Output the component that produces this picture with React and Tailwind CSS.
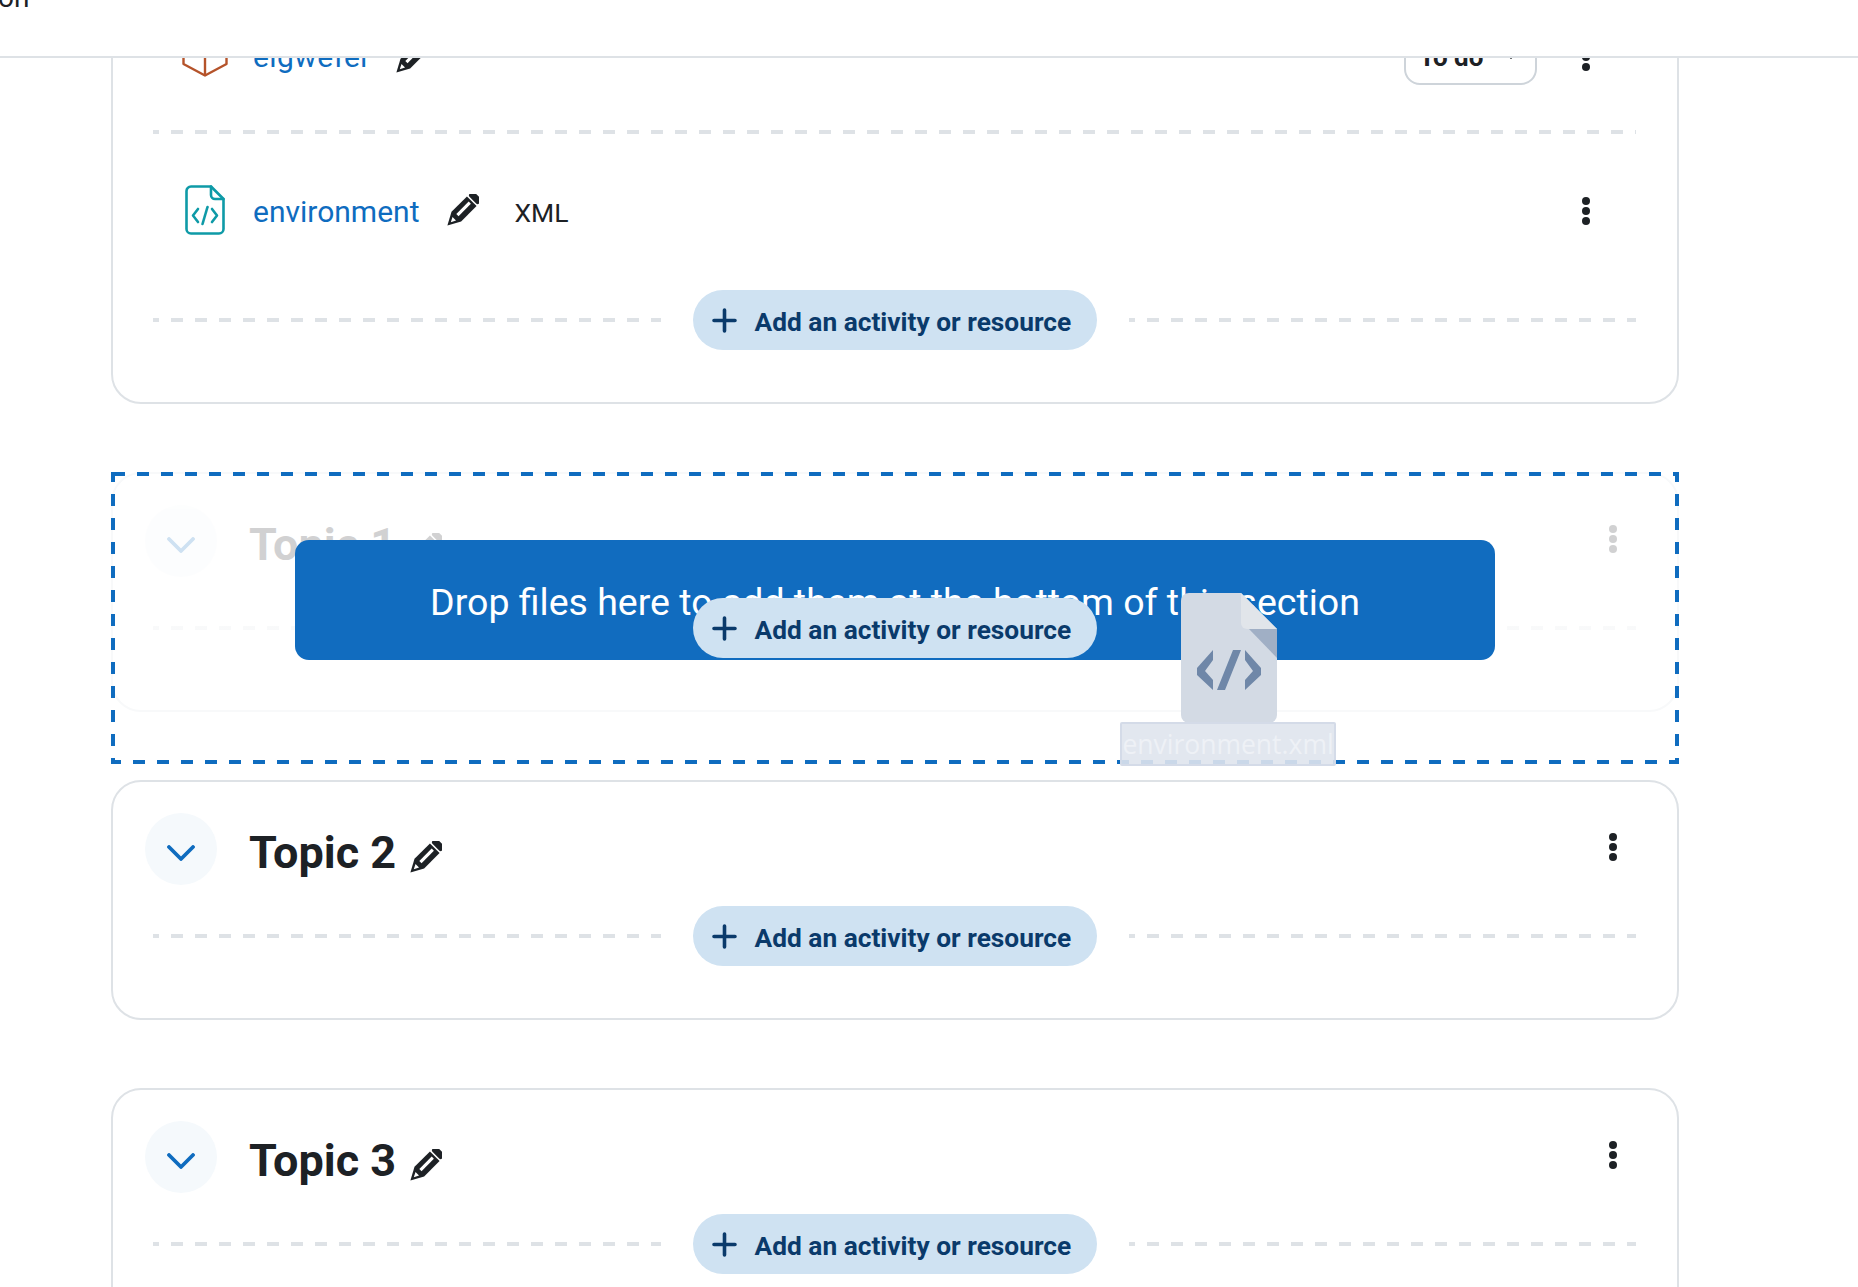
import React from "react";

const FONT = { fontFamily: "Roboto, sans-serif" };

function Pencil({ className }) {
  return (
    <svg viewBox="-17 -17 34 34" className={className} aria-hidden="true">
      <g transform="rotate(45)">
        <rect x="-7" y="-22" width="14" height="7" rx="2.5" fill="#1d2125" />
        <path d="M-7 -13.5 H7 V9 L0 22 L-7 9 Z" fill="#1d2125" />
        <path d="M-2 -11 H1.2 V7 H-2 Z" fill="#fff" />
        <path d="M-2.6 12 H2.6 L0 17 Z" fill="#fff" />
      </g>
    </svg>
  );
}

function Kebab({ className }) {
  return (
    <svg viewBox="0 0 8 28" className={className} fill="#1d2125" aria-hidden="true">
      <circle cx="4" cy="4" r="4" />
      <circle cx="4" cy="14" r="4" />
      <circle cx="4" cy="24" r="4" />
    </svg>
  );
}

function CodeFileIcon() {
  return (
    <svg viewBox="0 0 40 50" className="w-[40px] h-[50px] -mt-[5px]" fill="none" stroke="#0e9aa7" strokeWidth="2.6" strokeLinecap="round" strokeLinejoin="round">
      <path d="M26 1.5 H6 a4.5 4.5 0 0 0 -4.5 4.5 V44 a4.5 4.5 0 0 0 4.5 4.5 H34 a4.5 4.5 0 0 0 4.5 -4.5 V14 Z" />
      <path d="M26 1.5 V10 a4 4 0 0 0 4 4 H38.5" />
      <path d="M13 24 L8 30.5 L13 37" />
      <path d="M27 24 L32 30.5 L27 37" />
      <path d="M22.5 22 L17.5 39" />
    </svg>
  );
}

function BoxIcon() {
  return (
    <svg viewBox="0 0 46 50" className="w-[46px] h-[50px] mb-[10px]" fill="none" stroke="#b5532a" strokeWidth="2.4" strokeLinejoin="round">
      <path d="M23 1.5 L44.5 13 V37 L23 48.5 L1.5 37 V13 Z" />
      <path d="M1.5 13 L23 25 L44.5 13" />
      <path d="M23 25 V48.5" />
    </svg>
  );
}

function Dashes({ className = "" }) {
  return (
    <div className={`flex-1 h-[4px] bg-[repeating-linear-gradient(90deg,#dee2e6_0,#dee2e6_6px,transparent_6px,transparent_18px,#dee2e6_18px,#dee2e6_24px)] ${className}`} />
  );
}

function AddRow({ faded }) {
  return (
    <div className="flex items-center">
      <Dashes className={faded ? "opacity-20" : ""} />
      <button className="relative z-20 mx-[32px] w-[404px] h-[60px] shrink-0 flex items-center pl-[19px] rounded-full bg-[#cfe2f2] text-[#0a3a6b] text-[26.3px] font-bold whitespace-nowrap">
        <svg viewBox="0 0 25 25" className="w-[25px] h-[25px] mr-[18px]" stroke="#0a3a6b" strokeWidth="3.6" strokeLinecap="round">
          <path d="M12.5 2 V23 M2 12.5 H23" />
        </svg>
        <span className="pt-[5px]">Add an activity or resource</span>
      </button>
      <Dashes className={faded ? "opacity-20" : ""} />
    </div>
  );
}

function Section({ title, faded }) {
  return (
    <section className={`h-[240px] rounded-[30px] border-2 pl-[40px] pr-[41px] pt-[31px] ${faded ? "border-[#f8f9fa]" : "border-[#dee2e6]"}`}>
      <div className={`flex items-start h-[72px] -ml-[8px] mr-[19px] ${faded ? "opacity-20" : ""}`}>
        <div className="w-[72px] h-[72px] rounded-full bg-[#f5f9fc] flex items-center justify-center">
          <svg viewBox="0 0 28 16" className="w-[28px] h-[16px] mt-[8px]" fill="none" stroke="#0f6cbf" strokeWidth="3.8" strokeLinecap="round" strokeLinejoin="round">
            <path d="M2 2 L14 14 L26 2" />
          </svg>
        </div>
        <h3 className="ml-[32px] mt-[12px] text-[45px] leading-[56px] font-bold text-[#1d2125] whitespace-nowrap">{title}</h3>
        <Pencil className="ml-[13px] mt-[28px] w-[33px] h-[33px]" />
        <Kebab className="ml-auto mt-[20px] w-[8px] h-[28px]" />
      </div>
      <div className="mt-[21px]">
        <AddRow faded={faded} />
      </div>
    </section>
  );
}

function DropZone() {
  return (
    <div className="absolute left-0 top-0 w-[1568px] h-[292px] z-10 pointer-events-none">
      <svg className="absolute inset-0 w-full h-full" fill="none">
        <rect x="2" y="2" width="1564" height="288" stroke="#0f6cbf" strokeWidth="4" strokeDasharray="12 12" />
      </svg>
      <div className="absolute left-[184px] top-[68px] w-[1200px] h-[120px] rounded-[14px] bg-[#116cbf] flex items-center justify-center text-white text-[37.5px] pt-[5px] whitespace-nowrap">
        Drop files here to add them at the bottom of this section
      </div>
    </div>
  );
}

function DragImage() {
  return (
    <div className="absolute left-[1010px] top-[121px] z-30 w-[216px] flex flex-col items-center pointer-events-none">
      <svg viewBox="0 0 96 130" className="w-[96px] h-[130px] block">
        <path d="M8 0 H60 L96 36 V122 a8 8 0 0 1 -8 8 H8 a8 8 0 0 1 -8 -8 V8 a8 8 0 0 1 8 -8 Z" fill="#d3dae4" />
        <path d="M60 0 L96 36 H66 a6 6 0 0 1 -6 -6 Z" fill="#e1e5ea" />
        <path d="M68 36 H96 V65 Z" fill="#a0afc5" />
        <path d="M32 57 L16 75 V82 L32 97 V87 L24 78 L32 67 Z M64 57 L80 75 V82 L64 97 V87 L72 78 L64 67 Z M52 57 H60 L44 97 H36 Z" fill="#6f87a8" />
      </svg>
      <div className="-mt-[1px] -ml-[2px] w-[216px] h-[44px] rounded-[2px] border-2 border-[#d3dae8]/90 bg-[#dfe4ed]/90 text-[#eef1f6] text-[26.5px] leading-[40px] text-center whitespace-nowrap overflow-hidden" style={{ fontFamily: '"Open Sans", sans-serif' }}>
        environment.xml
      </div>
    </div>
  );
}

export default function App() {
  return (
    <div className="w-[1858px] h-[1287px] overflow-hidden flex flex-col bg-white text-[#1d2125]" style={FONT}>
      <header className="relative z-40 h-[58px] shrink-0 bg-white border-b-2 border-[#dee2e6] overflow-hidden">
        <div className="-mt-[18px] -ml-[2px] text-[28px] leading-[32px]">on</div>
      </header>

      <main className="flex-1 overflow-hidden">
        <div className="-mt-[86px] ml-[111px] w-[1568px] flex flex-col gap-[68px]">
          <section className="h-[432px] rounded-[30px] border-2 border-[#dee2e6] pl-[40px] pr-[41px]">
            <div className="h-[156px] pt-[10px] pl-[29px] pr-[46px] flex items-center">
              <BoxIcon />
              <a className="ml-[25px] -mt-[2px] text-[30px] tracking-[0.4px] text-[#0f6cbf]">eigwefer</a>
              <Pencil className="ml-[24px] w-[33px] h-[33px]" />
              <div className="ml-auto w-[133px] h-[56px] rounded-[16px] border-2 border-[#ced4da] flex items-center pl-[13px] text-[26px] font-bold">
                To do
                <svg viewBox="0 0 12 7" className="ml-[22px] mb-[4px] w-[12px] h-[7px]" fill="none" stroke="#1d2125" strokeWidth="1.6">
                  <path d="M1 1 L6 6 L11 1" />
                </svg>
              </div>
              <Kebab className="ml-[45px] w-[8px] h-[28px] -mt-[1px]" />
            </div>
            <Dashes className="flex-none" />
            <div className="h-[156px] pl-[32px] pr-[46px] flex items-center">
              <CodeFileIcon />
              <a className="ml-[28px] -mt-[2px] text-[30px] text-[#0f6cbf]">environment</a>
              <Pencil className="ml-[27px] w-[33px] h-[33px] -mt-[3px]" />
              <span className="ml-[35px] text-[26.5px] mt-[2px]">XML</span>
              <Kebab className="ml-auto w-[8px] h-[28px] -mt-[2px]" />
            </div>
            <AddRow />
          </section>

          <div className="relative">
            <Section title="Topic 1" faded />
            <DropZone />
            <DragImage />
          </div>

          <Section title="Topic 2" />
          <Section title="Topic 3" />
        </div>
      </main>
    </div>
  );
}
